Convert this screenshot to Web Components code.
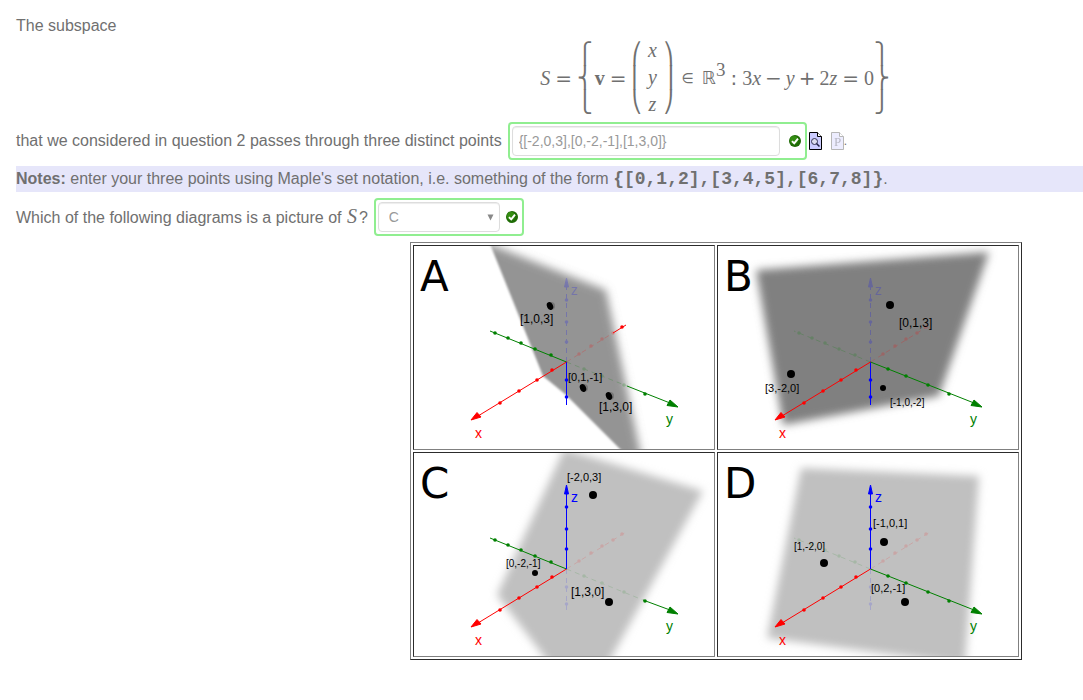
<!DOCTYPE html>
<html lang="en">
<head>
<meta charset="utf-8">
<title>Subspace question</title>
<style>
  body {
    margin: 0;
    background: white;
    color: #707070;
    font: 16px/20px "Liberation Sans", Arial, sans-serif;
  }
</style>
</head>
<body>

<question-sheet>
  <p>The subspace</p>
  <set-formula></set-formula>
  <answer-field value="{[-2,0,3],[0,-2,-1],[1,3,0]}">
    that we considered in question 2 passes through three distinct points
    <answer-tools slot="after"></answer-tools>
  </answer-field>
  <note-bar>enter your three points using Maple's set notation, i.e. something of the form
    <maple-code>{[0,1,2],[3,4,5],[6,7,8]}</maple-code>.</note-bar>
  <answer-choice options="A,B,C,D" value="C">
    Which of the following diagrams is a picture of <math-var>S</math-var>?
  </answer-choice>
  <diagram-grid>
    <plane-diagram name="A"></plane-diagram>
    <plane-diagram name="B"></plane-diagram>
    <plane-diagram name="C"></plane-diagram>
    <plane-diagram name="D"></plane-diagram>
  </diagram-grid>
</question-sheet>

<script>
const CHECK_ICON = `
  <svg class="check" width="12" height="12" viewBox="0 0 12 12" role="img" aria-label="Correct">
    <circle cx="6" cy="6" r="6" fill="#1e6b05"/>
    <circle cx="5" cy="5" r="4" fill="#348d12"/>
    <path d="M3 6.2 5.2 8.4 9 3.6" fill="none" stroke="white" stroke-width="1.9"/>
  </svg>`;

// shared by the two kinds of answer
const FIELD_STYLE = `
  :host {
    display: flex;
    align-items: center;
  }

  .frame {
    display: flex;
    align-items: center;
    margin-left: 6px;
    padding: 2px 4px 2px 2px;
    border: 2px solid lightgreen;
    border-radius: 4px;
  }

  input, select {
    box-sizing: border-box;
    height: 30px;
    margin: 0;
    border: 1px solid #ddd;
    border-radius: 4px;
    background: white;
    box-shadow: inset 0 1px 1px rgb(0,0,0,0.075);
    color: #999;
    font: 14px/20px "Liberation Sans", Arial, sans-serif;
  }

  .check {
    flex: none;
  }
`;

class QuestionSheet extends HTMLElement {
  constructor() {
    super();
    this.attachShadow({ mode: 'open' });
    this.shadowRoot.innerHTML = `
      <style>
        :host {
          display: flex;
          flex-direction: column;
          gap: 6px;
          padding: 16px 0 16px 16px;
          --indent: 333px;
        }

        ::slotted(p) {
          margin: 0;
        }
      </style>
      <slot></slot>
    `;
  }
}

class SetFormula extends HTMLElement {
  constructor() {
    super();
    this.attachShadow({ mode: 'open' });
    this.shadowRoot.innerHTML = `
      <style>
        :host {
          display: flex;
          justify-content: center;
          align-items: center;
          height: 72px;
          padding: 0 2px 2px var(--indent);
          font: 20px/24px "Liberation Serif", "Times New Roman", serif;
        }

        .delim {
          display: grid;
          grid-auto-rows: 24px;
          font: 21px/24px "DejaVu Sans", sans-serif;
        }

        .open {
          margin-right: 2px;
        }

        .rel, .op {
          margin: 0 5px;
          font: 20px/24px "DejaVu Sans", sans-serif;
        }

        .op {
          margin: 0 4px;
        }

        .vector {
          display: grid;
          grid-auto-rows: 27px;
          justify-items: center;
          padding: 0 6px;
        }

        .in, .real {
          font: 18px/24px "DejaVu Sans", sans-serif;
        }

        .in {
          margin: 0 8px;
          font-size: 14px;
        }

        sup {
          align-self: flex-start;
          margin-top: 18px;
          font-size: 19px;
          line-height: 20px;
        }
      </style>
      <i>S</i><span class="rel">=</span>
      <span class="delim open"><span>⎧</span><span>⎨</span><span>⎩</span></span>
      <b>v</b><span class="rel">=</span>
      <span class="delim"><span>⎛</span><span>⎜</span><span>⎝</span></span>
      <span class="vector"><i>x</i><i>y</i><i>z</i></span>
      <span class="delim"><span>⎞</span><span>⎟</span><span>⎠</span></span>
      <span class="in">∈</span><span class="real">ℝ</span><sup>3</sup>
      <span class="rel">:</span><span>3<i>x</i></span><span class="op">−</span><i>y</i>
      <span class="op">+</span><span>2<i>z</i></span><span class="rel">=</span><span>0</span>
      <span class="delim"><span>⎫</span><span>⎬</span><span>⎭</span></span>
    `;
  }
}

class MathVar extends HTMLElement {
  constructor() {
    super();
    this.attachShadow({ mode: 'open' });
    this.shadowRoot.innerHTML = `<style>
        :host {
          margin: 0 2px 0 1px;
          font: italic 20px/20px "Liberation Serif", "Times New Roman", serif;
        }
      </style><slot></slot>`;
  }
}

class MapleCode extends HTMLElement {
  constructor() {
    super();
    this.attachShadow({ mode: 'open' });
    this.shadowRoot.innerHTML = `
      <style>
        code {
          font: bold 18px/20px "Liberation Mono", "Courier New", monospace;
        }
      </style>
      <code><slot></slot></code>`;
  }
}

class NoteBar extends HTMLElement {
  constructor() {
    super();
    this.attachShadow({ mode: 'open' });
    this.shadowRoot.innerHTML = `
      <style>
        :host {
          display: block;
          padding: 3px 0;
          background: lavender;
        }
      </style>
      <b>Notes:</b> <slot></slot>
    `;
  }
}

class AnswerField extends HTMLElement {
  constructor() {
    super();
    this.attachShadow({ mode: 'open' });
    this.shadowRoot.innerHTML = `
      <style>
        ${FIELD_STYLE}

        input {
          width: 268px;
          margin-right: 9px;
          padding: 0 6px;
        }
      </style>
      <label for="field"><slot></slot></label>
      <span class="frame"><input id="field" type="text">${CHECK_ICON}</span>
      <slot name="after"></slot>
    `;
  }

  connectedCallback() {
    this.shadowRoot.querySelector('input').value = this.getAttribute('value');
  }
}

class AnswerChoice extends HTMLElement {
  constructor() {
    super();
    this.attachShadow({ mode: 'open' });
    this.shadowRoot.innerHTML = `
      <style>
        ${FIELD_STYLE}

        .picker {
          display: grid;
          align-items: center;
          margin-right: 6px;
        }

        .picker > * {
          grid-area: 1 / 1;
        }

        select {
          appearance: none;
          width: 122px;
          padding: 0 10px;
        }

        .arrow {
          justify-self: end;
          margin-right: 6px;
          pointer-events: none;
        }
      </style>
      <label for="field"><slot></slot></label>
      <span class="frame">
        <span class="picker">
          <select id="field"></select>
          <svg class="arrow" width="7" height="7" viewBox="0 0 7 7"><path d="M.5.5H6.5L3.5 6.5Z" fill="#888"/></svg>
        </span>
        ${CHECK_ICON}
      </span>
    `;
  }

  connectedCallback() {
    const select = this.shadowRoot.querySelector('select');
    for (const name of this.getAttribute('options').split(',')) {
      select.add(new Option(name));
    }
    select.value = this.getAttribute('value');
  }
}

class AnswerTools extends HTMLElement {
  constructor() {
    super();
    this.attachShadow({ mode: 'open' });
    this.shadowRoot.innerHTML = `
      <style>
        :host {
          display: flex;
          align-items: center;
          font-size: 12px;
        }

        a {
          display: block;
          height: 18px;
          margin-left: 2px;
        }

        a + a {
          margin-left: 9px;
          opacity: 0.35;
        }

        svg {
          display: block;
        }
      </style>
      <a href="#preview" aria-label="Preview">
        <svg width="13" height="18" viewBox="0 0 13 18">
          <path d="M.5.5H8.5L12.5 4.5V17.5H.5Z" fill="#ccf" stroke="black"/>
          <path d="M8.5.5V4.5H12.5" fill="white" stroke="black"/>
          <circle cx="5.5" cy="9.5" r="3" fill="#dde" stroke="#335"/>
          <path d="M7.5 11.5 10.5 14.5" stroke="#224" stroke-width="1.5"/>
        </svg>
      </a>
      <a href="#plot" aria-label="Plot">
        <svg width="13" height="18" viewBox="0 0 13 18">
          <path d="M.5.5H8.5L12.5 4.5V17.5H.5Z" fill="#ccf" stroke="#333"/>
          <path d="M8.5.5V4.5H12.5" fill="white" stroke="#333"/>
          <text x="3" y="14" font-family="Liberation Serif, serif" font-size="13" fill="#335">P</text>
        </svg>
      </a>
      <span>.</span>
    `;
  }
}

class DiagramGrid extends HTMLElement {
  constructor() {
    super();
    this.attachShadow({ mode: 'open' });
    this.shadowRoot.innerHTML = `
      <style>
        :host {
          display: flex;
          justify-content: center;
          padding-left: var(--indent);
        }

        .grid {
          display: grid;
          grid-template-columns: auto auto;
          gap: 2px;
          padding: 2px;
          border: 1px solid;
          border-color: #808080 #2c2c2c #2c2c2c #808080;
        }
      </style>
      <div class="grid"><slot></slot></div>
    `;
  }
}

// The six half axes, seen from the same camera in every diagram.
const ORIGIN = [152.5, 116];
const HALF_AXES = {
  xNeg: { color: 'red', end: [212, 79], ticks: [[165, 108], [177, 100], [188, 93], [199, 87], [208, 81]] },
  yNeg: { color: 'green', end: [76, 85], ticks: [[81, 87], [94, 92], [107, 97], [121, 103], [137, 109]] },
  zNeg: { color: 'blue', end: [152.5, 159], ticks: [[152.5, 134], [152.5, 151]] },
  yPos: { color: 'green', end: [256, 157], ticks: [[170, 123], [188, 130], [210, 139], [231, 148]], arrow: '264,161 253,159.5 256,154' },
  xPos: { color: 'red', end: [64, 170], ticks: [[138, 124], [123, 134], [105, 145], [86, 157]], arrow: '57,174 63,166.5 67,171' },
  zPos: { color: 'blue', end: [152.5, 40], ticks: [[152.5, 54], [152.5, 76], [152.5, 96]], arrow: '152.5,32 150.5,41 154.5,41' },
};

// hidden: half axes behind the plane, 'all' or the point where they come out
const DIAGRAMS = {
  A: {
    fill: '#949494',
    faint: 0.2,
    plane: '40,-16 192,44 228,214 120,260 0,120',
    clip: '76,-2 129,130 151,148 209,206 300,206 300,-2',
    hidden: { zPos: 'all', xNeg: [199, 87], yPos: [213, 140] },
    points: [[136, 60, 4], [169, 142, 4], [195, 150, 4]],
    shaded: true,
    labels: [['[1,0,3]', 106, 77, 12], ['[0,1,-1]', 154, 135, 11], ['[1,3,0]', 185, 165, 12]],
  },
  B: {
    fill: '#808080',
    faint: 0.2,
    plane: '38,24 271,6 221,150 65,179',
    hidden: { zPos: 'all', xNeg: 'all', yNeg: 'all' },
    points: [[172, 59, 4], [73, 128, 4], [165, 142, 3]],
    labels: [['[0,1,3]', 181, 81, 12], ['[3,-2,0]', 47, 146, 11], ['[-1,0,-2]', 172, 160, 10]],
  },
  C: {
    fill: '#c0c0c0',
    faint: 0.13,
    plane: '150,-4 289,38 185,227 148,227 83,142',
    hidden: { zNeg: 'all', xNeg: 'all', yPos: [229, 147] },
    points: [[179, 42, 4], [121, 120, 3], [195, 149, 4]],
    labels: [['[-2,0,3]', 153, 28, 11], ['[0,-2,-1]', 92, 114, 10], ['[1,3,0]', 157, 143, 12]],
  },
  D: {
    fill: '#c0c0c0',
    faint: 0.13,
    plane: '83,15 261,23 247,211 49,185',
    hidden: { zNeg: 'all', xNeg: 'all', yNeg: 'all' },
    points: [[166, 89, 4], [106, 110, 4], [187, 149, 4]],
    labels: [['[-1,0,1]', 155, 74, 11], ['[1,-2,0]', 76, 97, 10], ['[0,2,-1]', 153, 139, 11]],
  },
};

class PlaneDiagram extends HTMLElement {
  constructor() {
    super();
    this.attachShadow({ mode: 'open' });
  }

  connectedCallback() {
    this._name = this.getAttribute('name');
    this._data = DIAGRAMS[this._name];
    this._render();
  }

  _line(from, to, color, extra = '') {
    return `<line x1="${from[0]}" y1="${from[1]}" x2="${to[0]}" y2="${to[1]}" stroke="${color}" ${extra}/>`;
  }

  _tick(point, color) {
    return `<circle cx="${point[0]}" cy="${point[1]}" r="1.8" fill="${color}"/>`;
  }

  _halfAxis(key) {
    const { color, end, ticks, arrow } = HALF_AXES[key];
    const exit = this._data.hidden[key];
    const head = arrow ? `<polygon points="${arrow}" fill="${color}" stroke="${color}"/>` : '';

    if (!exit) {
      return this._line(ORIGIN, end, color) + ticks.map(t => this._tick(t, color)).join('') + head;
    }

    const stop = exit === 'all' ? end : exit;
    const isBehind = t => exit === 'all' || Math.abs(t[0] - ORIGIN[0]) <= Math.abs(exit[0] - ORIGIN[0]);
    const behind = ticks.filter(isBehind).map(t => this._tick(t, color)).join('');
    const front = ticks.filter(t => !isBehind(t)).map(t => this._tick(t, color)).join('');

    return `
      <g opacity="${this._data.faint}">
        ${this._line(ORIGIN, stop, color, 'stroke-dasharray="5 4"')}
        ${behind}${exit === 'all' ? head : ''}
      </g>
      ${exit === 'all' ? '' : this._line(stop, end, color) + front + head}`;
  }

  _point([x, y, r]) {
    if (!this._data.shaded) {
      return `<circle cx="${x}" cy="${y}" r="${r}"/>`;
    }
    return `
      <circle cx="${x + 1}" cy="${y}" r="${r}" fill="#777"/>
      <ellipse cx="${x}" cy="${y}" rx="${r - 1}" ry="${r}" transform="rotate(-25 ${x} ${y})"/>`;
  }

  _render() {
    const { fill, plane, clip, points, labels, hidden, faint } = this._data;

    this.shadowRoot.innerHTML = `
      <style>
        :host {
          display: block;
          border: 1px solid;
          border-color: #2c2c2c #808080 #808080 #2c2c2c;
        }

        svg {
          display: block;
          font-family: "Liberation Sans", Arial, sans-serif;
        }

        .name {
          font: 42px "DejaVu Sans", sans-serif;
        }

        .axis {
          font-size: 14px;
        }
      </style>
      <svg width="300" height="203" viewBox="0 0 300 203" role="img" aria-label="Diagram ${this._name}">
        <defs>
          <filter id="soft" x="-20%" y="-20%" width="140%" height="140%"><feGaussianBlur stdDeviation="4"/></filter>
          <filter id="edge"><feGaussianBlur stdDeviation="1"/></filter>
          <clipPath id="clip"><polygon points="${clip || '-20,-20 320,-20 320,223 -20,223'}"/></clipPath>
        </defs>
        <g ${clip ? 'filter="url(#edge)"' : ''}>
          <g clip-path="url(#clip)">
            <polygon points="${plane}" fill="${fill}" filter="url(#soft)"/>
          </g>
        </g>
        ${Object.keys(HALF_AXES).map(key => this._halfAxis(key)).join('')}
        ${points.map(point => this._point(point)).join('')}
        <text class="axis" x="61" y="192" fill="red">x</text>
        <text class="axis" x="252" y="178" fill="green">y</text>
        <text class="axis" x="157" y="49" fill="blue" opacity="${hidden.zPos ? faint : 1}">z</text>
        ${labels.map(([text, x, y, size]) => `<text x="${x}" y="${y}" font-size="${size}">${text}</text>`).join('')}
        <text class="name" x="6" y="45">${this._name}</text>
      </svg>
    `;
  }
}

customElements.define('question-sheet', QuestionSheet);
customElements.define('set-formula', SetFormula);
customElements.define('math-var', MathVar);
customElements.define('maple-code', MapleCode);
customElements.define('note-bar', NoteBar);
customElements.define('answer-field', AnswerField);
customElements.define('answer-choice', AnswerChoice);
customElements.define('answer-tools', AnswerTools);
customElements.define('diagram-grid', DiagramGrid);
customElements.define('plane-diagram', PlaneDiagram);
</script>
</body>
</html>
